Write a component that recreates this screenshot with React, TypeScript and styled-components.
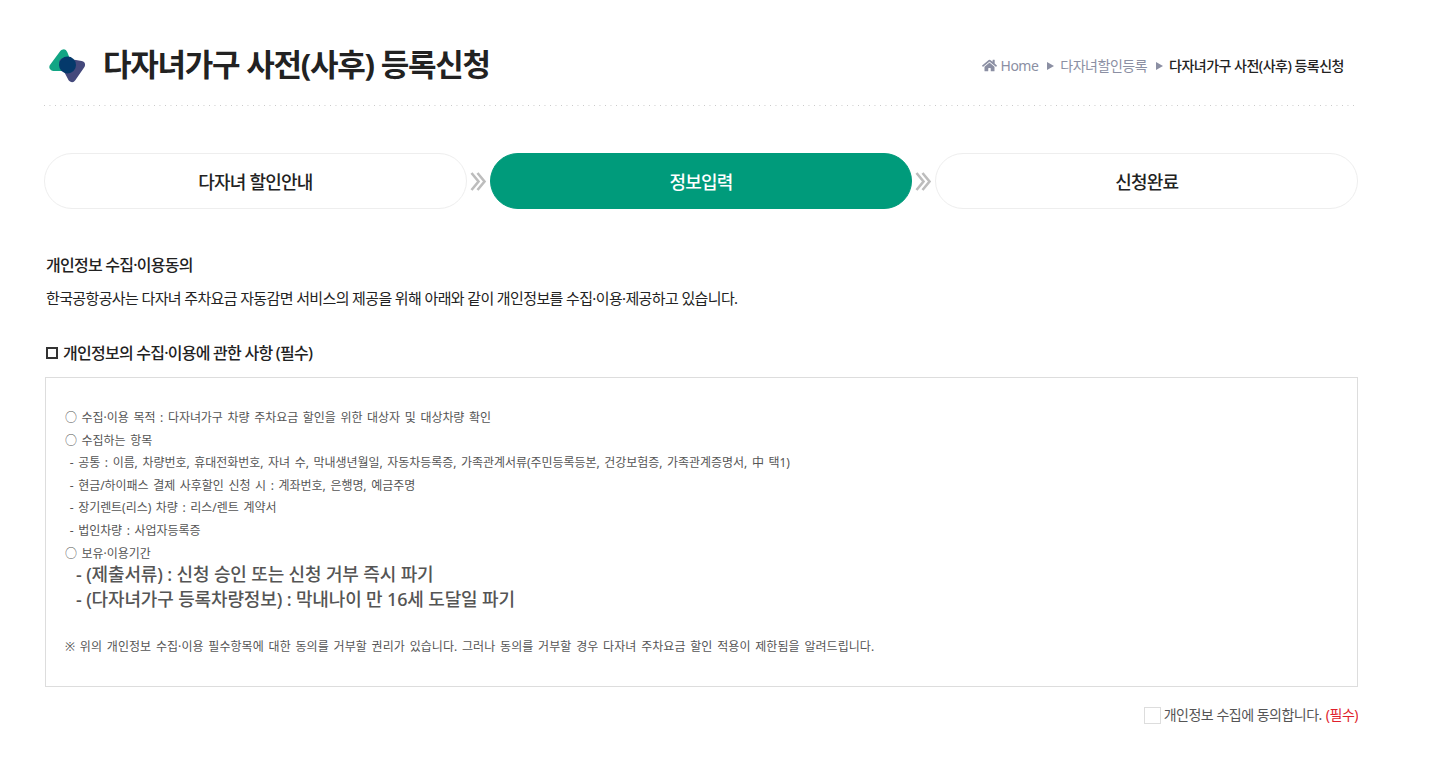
import React from "react";
import styled, { createGlobalStyle } from "styled-components";
import { FaHome } from "react-icons/fa";

const GlobalStyle = createGlobalStyle`
    html, body {
        margin: 0;
        padding: 0;
        background: #fff;
        overflow: hidden;
    }
    body {
        font-family: "Noto Sans", "Noto Sans CJK KR", sans-serif;
        color: #222;
    }
`;

const STEPS = ["다자녀 할인안내", "정보입력", "신청완료"];

const App: React.FC = () => {
    return (
        <Page>
            <GlobalStyle />
            <Header>
                <TitleWrap>
                    <Logo viewBox="0 0 38 36">
                        <path className="green" d="M15.500 6.500L5.500 20H21z" />
                        <path className="blue" d="M15.500 15L33 18 24 31z" />
                        <circle cx="19.500" cy="18" r="8.500" />
                    </Logo>
                    <Title>다자녀가구 사전(사후) 등록신청</Title>
                </TitleWrap>
                <Breadcrumb>
                    <FaHome size={15} />
                    <Crumb>Home</Crumb>
                    <Arrow />
                    <Crumb>다자녀할인등록</Crumb>
                    <Arrow />
                    <CurrentCrumb>다자녀가구 사전(사후) 등록신청</CurrentCrumb>
                </Breadcrumb>
            </Header>

            <Steps>
                {STEPS.map((step, i) => (
                    <React.Fragment key={step}>
                        {i > 0 && (
                            <Chevron viewBox="0 0 17 19">
                                <path d="M1.500 1l7 8.500-7 8.500M7.500 1l7 8.500-7 8.500" />
                            </Chevron>
                        )}
                        <Step $active={i === 1}>{step}</Step>
                    </React.Fragment>
                ))}
            </Steps>

            <SectionTitle>개인정보 수집·이용동의</SectionTitle>
            <Intro>
                한국공항공사는 다자녀 주차요금 자동감면 서비스의 제공을 위해 아래와 같이 개인정보를 수집·이용·제공하고 있습니다.
            </Intro>

            <SubTitle>
                <SquareMark />
                개인정보의 수집·이용에 관한 사항 (필수)
            </SubTitle>
            <TermsBox>
                <Line>○ 수집·이용 목적 : 다자녀가구 차량 주차요금 할인을 위한 대상자 및 대상차량 확인</Line>
                <Line>○ 수집하는 항목</Line>
                <Line>
                    &nbsp;- 공통 : 이름, 차량번호, 휴대전화번호, 자녀 수, 막내생년월일, 자동차등록증, 가족관계서류(주민등록등본, 건강보험증, 가족관계증명서, 中 택1)
                </Line>
                <Line>&nbsp;- 현금/하이패스 결제 사후할인 신청 시 : 계좌번호, 은행명, 예금주명</Line>
                <Line>&nbsp;- 장기렌트(리스) 차량 : 리스/렌트 계약서</Line>
                <Line>&nbsp;- 법인차량 : 사업자등록증</Line>
                <Line>○ 보유·이용기간</Line>
                <StrongList>
                    <Strong>- (제출서류) : 신청 승인 또는 신청 거부 즉시 파기</Strong>
                    <Strong>- (다자녀가구 등록차량정보) : 막내나이 만 16세 도달일 파기</Strong>
                </StrongList>
                <Notice>
                    ※ 위의 개인정보 수집·이용 필수항목에 대한 동의를 거부할 권리가 있습니다. 그러나 동의를 거부할 경우 다자녀 주차요금 할인 적용이 제한됨을 알려드립니다.
                </Notice>
            </TermsBox>

            <Agree>
                <Checkbox type="checkbox" />
                개인정보 수집에 동의합니다.
                <Required>(필수)</Required>
            </Agree>
        </Page>
    );
};

export default App;

const Page = styled.div`
    width: 1314px;
    height: 757px;
    margin-left: 44px;
    overflow: hidden;
`;

const Header = styled.div`
    display: flex;
    align-items: center;
    justify-content: space-between;
    padding: 48px 14px 24px 4px;
    background: linear-gradient(to right, #c8c8c8 1px, transparent 1px) left bottom / 5.5px 1px repeat-x;
`;

const TitleWrap = styled.div`
    display: flex;
    align-items: center;
    gap: 17px;
    height: 34px;
`;

const Logo = styled.svg`
    width: 38px;
    height: 36px;
    path {
        stroke-width: 8;
        stroke-linejoin: round;
    }
    .green {
        fill: #12a584;
        stroke: #12a584;
    }
    .blue {
        fill: #44497c;
        stroke: #44497c;
    }
    circle {
        fill: #04396b;
    }
`;

const Title = styled.h1`
    margin: 0 0 6px;
    font-size: 31px;
    font-weight: 700;
    letter-spacing: -1.24px;
    color: #222;
`;

const Breadcrumb = styled.div`
    display: flex;
    align-items: center;
    font-size: 14px;
    letter-spacing: -0.5px;
    color: #8b8fa3;
    svg {
        margin-right: 4px;
    }
`;

const Crumb = styled.span`
    color: #8b8fa3;
`;

const CurrentCrumb = styled.span`
    color: #222;
    font-weight: 500;
`;

const Arrow = styled.i`
    width: 0;
    height: 0;
    margin: 2px 6px 0 9px;
    border-left: 7px solid #8b8fa3;
    border-top: 4.500px solid transparent;
    border-bottom: 4.500px solid transparent;
`;

const Steps = styled.div`
    display: flex;
    align-items: center;
    gap: 3px;
    margin-top: 47px;
`;

const Step = styled.div<{ $active: boolean }>`
    display: flex;
    flex: 1;
    align-items: center;
    justify-content: center;
    height: 56px;
    box-sizing: border-box;
    border-radius: 28px;
    border: 1px solid ${(p) => (p.$active ? "#009b7b" : "#eee")};
    background: ${(p) => (p.$active ? "#009b7b" : "#fff")};
    color: ${(p) => (p.$active ? "#fff" : "#222")};
    font-size: 18px;
    font-weight: 500;
    letter-spacing: -0.8px;
`;

const Chevron = styled.svg`
    width: 17px;
    height: 19px;
    path {
        fill: none;
        stroke: #bdbdbd;
        stroke-width: 2.6;
    }
`;

const SectionTitle = styled.h2`
    margin: 44px 0 0 2px;
    font-size: 16px;
    line-height: 24px;
    font-weight: 500;
    letter-spacing: -0.75px;
    color: #222;
`;

const Intro = styled.p`
    margin: 9px 0 0 2px;
    font-size: 15px;
    line-height: 24px;
    letter-spacing: -0.63px;
    color: #222;
`;

const SubTitle = styled.h3`
    display: flex;
    align-items: center;
    margin: 31px 0 0 2px;
    font-size: 16px;
    line-height: 24px;
    font-weight: 500;
    letter-spacing: -0.75px;
    color: #222;
`;

const SquareMark = styled.i`
    width: 12px;
    height: 12px;
    margin-right: 5px;
    box-sizing: border-box;
    border: 2px solid #333;
`;

const TermsBox = styled.div`
    height: 310px;
    margin: 12px 0 0 1px;
    padding: 29px 19px 0;
    box-sizing: border-box;
    border: 1px solid #ddd;
    color: #555;
`;

const Line = styled.div`
    font-size: 12px;
    line-height: 22.6px;
    letter-spacing: -0.05px;
    word-spacing: 1.6px;
`;

const StrongList = styled.div`
    margin: -3px 0 0 11px;
`;

const Strong = styled.div`
    font-size: 18px;
    line-height: 25px;
    font-weight: 500;
    letter-spacing: -0.15px;
`;

const Notice = styled.div`
    margin-top: 24px;
    font-size: 12px;
    line-height: 22px;
    letter-spacing: 0.05px;
    word-spacing: 1.6px;
`;

const Agree = styled.label`
    display: flex;
    align-items: center;
    justify-content: flex-end;
    margin-top: 18px;
    font-size: 14px;
    line-height: 20px;
    letter-spacing: -0.5px;
    color: #555;
`;

const Checkbox = styled.input`
    appearance: none;
    width: 17px;
    height: 17px;
    margin: 0 3px 0 0;
    border: 1px solid #ddd;
    background: #fff;
`;

const Required = styled.span`
    margin-left: 4px;
    color: #e01f2d;
`;
